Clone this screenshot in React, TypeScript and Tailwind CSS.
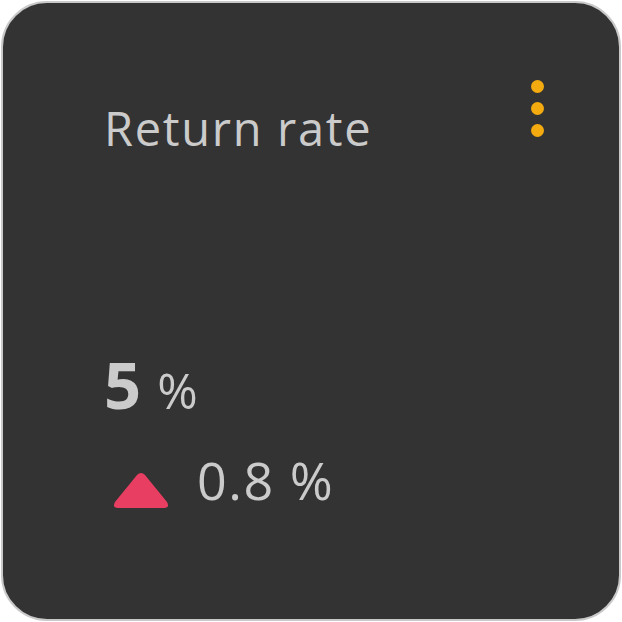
import React from 'react';

export default function App() {
  return (
    <div className="w-[622px] h-[622px] bg-white p-px">
      <div
        className="relative w-full h-full rounded-[46px] border-2 border-[#c9c9c9] bg-[#333333] text-[#cbcbcb] flex flex-col pl-[101px] pr-[80px]"
        style={{ fontFamily: '"Open Sans", "Noto Sans", sans-serif' }}
      >
        <div className="flex items-start justify-between pt-[95px]">
          <h2 className="text-[47px] leading-[60px] font-normal tracking-[1.7px]">Return rate</h2>
          <div className="flex flex-col gap-[9px] -mt-[18px] -mr-[5px]">
            <span className="w-[13px] h-[13px] rounded-full bg-[#f4ab10]" />
            <span className="w-[13px] h-[13px] rounded-full bg-[#f4ab10]" />
            <span className="w-[13px] h-[13px] rounded-full bg-[#f4ab10]" />
          </div>
        </div>

        <div className="mt-[196px] flex items-baseline gap-[16px]">
          <span className="text-[65px] leading-[60px] font-bold">5</span>
          <span className="text-[49px] leading-[60px] tracking-[2px]">%</span>
        </div>

        <div className="mt-[34px] flex items-end gap-[27px] pl-[8px]">
          <svg width="58" height="38" viewBox="0 0 58 38" className="-mb-[4px]">
            <path
              d="M25 3 Q29 -1 33 3 L55 30 Q58 36 52 36 L6 36 Q0 36 3 30 Z"
              fill="#e83e62"
            />
          </svg>
          <span className="text-[52px] leading-[52px] tracking-[1.5px]">0.8 %</span>
        </div>
      </div>
    </div>
  );
}
